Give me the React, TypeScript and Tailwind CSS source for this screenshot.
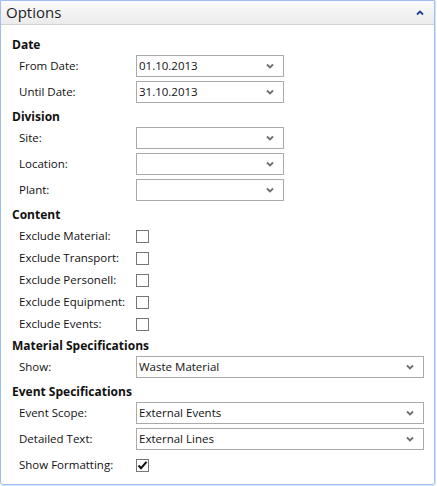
import React from 'react';

const font = { fontFamily: '"Open Sans", "Noto Sans", sans-serif' };

const Chevron = ({ up = false }: { up?: boolean }) => (
  <svg width="8" height="6" viewBox="0 0 8 6" className={up ? 'rotate-180' : ''}>
    <path d="M1 1.5 L4 4.5 L7 1.5" fill="none" stroke="currentColor" strokeWidth="1.8" />
  </svg>
);

const Dropdown = ({ value = '', wide = false }: { value?: string; wide?: boolean }) => (
  <div
    className={`${wide ? 'w-[288px]' : 'w-[148px]'} h-[22px] border border-[#a9a9a9] bg-white flex items-center justify-between pl-[2px] pr-[9px] text-[11.5px] text-[#111]`}
  >
    <span>{value}</span>
    <span className="text-[#6f6f6f]">
      <Chevron />
    </span>
  </div>
);

const Checkbox = ({ checked = false }: { checked?: boolean }) => (
  <div className="w-[13px] h-[13px] border border-[#767676] bg-white flex items-center justify-center">
    {checked && (
      <svg width="11" height="11" viewBox="0 0 11 11">
        <path d="M1.5 5.5 L4 8.2 L9.5 1.8" fill="none" stroke="#111" strokeWidth="2" />
      </svg>
    )}
  </div>
);

const Section = ({ title }: { title: string }) => (
  <div className="h-[20px] flex items-center text-[12px] font-bold text-[#111]">{title}</div>
);

const DropRow = ({ label, value, wide }: { label: string; value?: string; wide?: boolean }) => (
  <div className="flex items-start h-[26px] pl-[7px]">
    <div className="w-[117px] h-[22px] flex items-center text-[11.5px] text-[#111]">{label}</div>
    <Dropdown value={value} wide={wide} />
  </div>
);

const CheckRow = ({ label, checked }: { label: string; checked?: boolean }) => (
  <div className="flex items-center h-[22px] pl-[7px]">
    <div className="w-[117px] text-[11.5px] text-[#111]">{label}</div>
    <Checkbox checked={checked} />
  </div>
);

export default function App() {
  return (
    <div className="w-[437px] h-[486px] bg-white" style={font}>
      <div className="w-[435px] h-[485px] border border-[#9fbdee] rounded-b-[3px] shadow-[1px_1px_0_#d6e4fa] flex flex-col overflow-hidden">
        <div className="h-[24px] shrink-0 flex items-center justify-between pl-[5px] pr-[10px] bg-gradient-to-b from-[#fbfbfb] to-[#ebebeb] border-b border-[#d2d2d2]">
          <span className="text-[15px] text-[#1e1e1e] leading-none">Options</span>
          <span className="text-[#1f3f94]">
            <Chevron up />
          </span>
        </div>
        <div className="flex flex-col pl-[11px] pt-[10px]">
          <Section title="Date" />
          <DropRow label="From Date:" value="01.10.2013" />
          <DropRow label="Until Date:" value="31.10.2013" />

          <Section title="Division" />
          <DropRow label="Site:" />
          <DropRow label="Location:" />
          <DropRow label="Plant:" />

          <Section title="Content" />
          <CheckRow label="Exclude Material:" />
          <CheckRow label="Exclude Transport:" />
          <CheckRow label="Exclude Personell:" />
          <CheckRow label="Exclude Equipment:" />
          <CheckRow label="Exclude Events:" />

          <div className="h-[1px]" />
          <Section title="Material Specifications" />
          <DropRow label="Show:" value="Waste Material" wide />

          <Section title="Event Specifications" />
          <DropRow label="Event Scope:" value="External Events" wide />
          <DropRow label="Detailed Text:" value="External Lines" wide />
          <CheckRow label="Show Formatting:" checked />
        </div>
      </div>
    </div>
  );
}
